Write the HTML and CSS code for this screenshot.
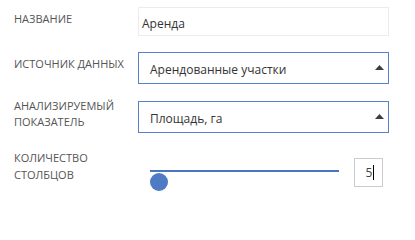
FILE: index.html
```html
<!DOCTYPE html>
<html lang="ru">
<head>
<meta charset="utf-8">
<link rel="stylesheet" href="styles.css">
</head>
<body>
<div class="form">
  <div class="row row-name">
    <div class="label">Название</div>
    <div class="field">
      <div class="text-input">Аренда</div>
    </div>
  </div>
  <div class="row row-source">
    <div class="label">Источник данных</div>
    <div class="field">
      <div class="select">
        <span class="select-value">Арендованные участки</span>
        <svg class="arrow" width="9" height="5" viewBox="0 0 9 5"><path d="M0 5 L4.5 0 L9 5 Z" fill="#394040"/></svg>
      </div>
    </div>
  </div>
  <div class="row row-metric">
    <div class="label">Анализируемый<br>показатель</div>
    <div class="field">
      <div class="select">
        <span class="select-value">Площадь, га</span>
        <svg class="arrow" width="9" height="5" viewBox="0 0 9 5"><path d="M0 5 L4.5 0 L9 5 Z" fill="#394040"/></svg>
      </div>
    </div>
  </div>
  <div class="row row-count">
    <div class="label">Количество<br>столбцов</div>
    <div class="field field-count">
      <div class="slider">
        <div class="track"></div>
        <div class="thumb"></div>
      </div>
      <div class="number">5<span class="caret"></span></div>
    </div>
  </div>
</div>
</body>
</html>
```
FILE: styles.css
```css
* { box-sizing: border-box; }
html, body { margin: 0; padding: 0; background: #fff; }
body {
  width: 415px;
  height: 202px;
  overflow: hidden;
  font-family: "Open Sans", "Liberation Sans", sans-serif;
}
.form {
  display: flex;
  flex-direction: column;
  padding: 7px 26px 0 14px;
}
.row {
  display: flex;
  align-items: flex-start;
}
.row-source { margin-top: 16px; }
.row-metric { margin-top: 17px; }
.row-count { margin-top: 25px; }
.label {
  width: 124px;
  flex: none;
  font-size: 11px;
  line-height: 16px;
  color: #555;
  text-transform: uppercase;
}
.row-name .label, .row-source .label { padding-top: 4px; }
.row-metric .label { padding-top: 0; margin-top: -3px; }
.row-count .label { margin-top: -9px; line-height: 17px; }
.field {
  flex: 1;
  display: flex;
}
.text-input {
  width: 100%;
  height: 29px;
  border: 1px solid #ececec;
  padding: 4px 0 0 3px;
  display: flex;
  align-items: center;
  font-size: 12px;
  color: #333;
}
.select {
  width: 100%;
  height: 32px;
  border: 1px solid #5582c6;
  display: flex;
  align-items: center;
  justify-content: space-between;
  padding: 2px 4px 0 11px;
  font-size: 12px;
  color: #333;
}
.arrow { display: block; margin-top: -3px; }
.field-count {
  align-items: flex-start;
}
.slider {
  margin-left: 12px;
  width: 189px;
  padding-top: 12px;
  display: flex;
  flex-direction: column;
}
.track {
  height: 2px;
  background: #4a76bd;
}
.thumb {
  margin-top: 1px;
  width: 18px;
  height: 18px;
  border-radius: 50%;
  background: #4e7bc4;
}
.number {
  margin-left: 15px;
  width: 29px;
  height: 29px;
  border: 1px solid #cccccc;
  display: flex;
  align-items: center;
  justify-content: center;
  font-size: 12px;
  color: #444;
  padding-left: 3px;
}
.caret {
  display: inline-block;
  width: 1px;
  height: 15px;
  background: #000;
  margin-left: 1px;
}
```
